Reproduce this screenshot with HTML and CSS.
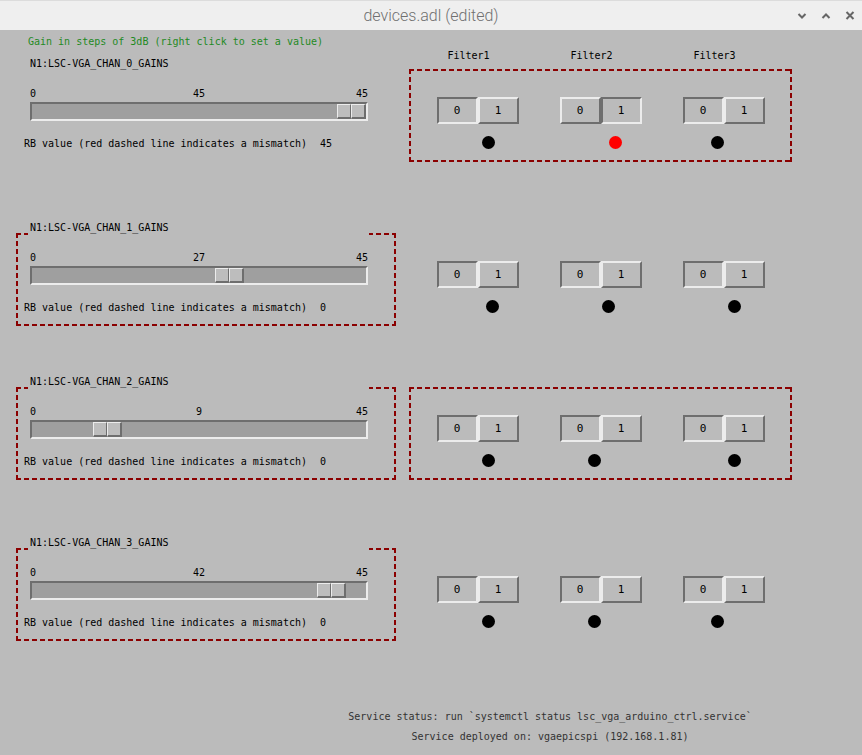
FILE: index.html
```html
<!DOCTYPE html>
<html>
<head>
<meta charset="utf-8">
<title>devices.adl (edited)</title>
<link rel="stylesheet" href="styles.css">
</head>
<body>
<div class="titlebar">
  <span></span>
  <span class="title">devices.adl (edited)</span>
  <div class="controls">
    <svg width="10" height="8" viewBox="0 0 10 8"><path d="M1.5 2 L5 5.5 L8.5 2" stroke="#666" stroke-width="2" fill="none"/></svg>
    <svg width="10" height="8" viewBox="0 0 10 8"><path d="M1.5 6 L5 2.5 L8.5 6" stroke="#666" stroke-width="2" fill="none"/></svg>
    <svg width="10" height="9" viewBox="0 0 10 9"><path d="M1.5 1 L8.5 8 M8.5 1 L1.5 8" stroke="#666" stroke-width="2" fill="none"/></svg>
  </div>
</div>
<main class="screen">
  <div class="pre">
    <div class="hint">Gain in steps of 3dB (right click to set a value)</div>
    <div class="filters"><span>Filter1</span><span>Filter2</span><span>Filter3</span></div>
  </div>

  <div class="row">
    <section class="gain">
      <div class="gain-label">N1:LSC-VGA_CHAN_0_GAINS</div>
      <div class="scale"><span class="lo">0</span><span class="mid">45</span><span class="hi">45</span></div>
      <div class="track"><div class="thumb" style="margin-left: calc((100% - 29px) * 1)"><i></i><i></i></div></div>
      <div class="rb"><span class="rb-label">RB value (red dashed line indicates a mismatch)</span><span>45</span></div>
    </section>
    <section class="bank dashed">
      <div class="cell"><div class="toggle"><span class="btn down">0</span><span class="btn up">1</span></div><div class="dot dot-m"></div></div>
      <div class="cell"><div class="toggle"><span class="btn up">0</span><span class="btn down">1</span></div><div class="dot red dot-r"></div></div>
      <div class="cell"><div class="toggle"><span class="btn down">0</span><span class="btn up">1</span></div><div class="dot dot-l"></div></div>
    </section>
  </div>

  <div class="row row-1">
    <section class="gain dashed">
      <div class="gain-label">N1:LSC-VGA_CHAN_1_GAINS</div>
      <div class="scale"><span class="lo">0</span><span class="mid">27</span><span class="hi">45</span></div>
      <div class="track"><div class="thumb" style="margin-left: calc((100% - 29px) * 0.6)"><i></i><i></i></div></div>
      <div class="rb"><span class="rb-label">RB value (red dashed line indicates a mismatch)</span><span>0</span></div>
    </section>
    <section class="bank">
      <div class="cell"><div class="toggle"><span class="btn down">0</span><span class="btn up">1</span></div><div class="dot dot-r"></div></div>
      <div class="cell"><div class="toggle"><span class="btn down">0</span><span class="btn up">1</span></div><div class="dot dot-s"></div></div>
      <div class="cell"><div class="toggle"><span class="btn down">0</span><span class="btn up">1</span></div><div class="dot dot-m"></div></div>
    </section>
  </div>

  <div class="row row-2">
    <section class="gain dashed">
      <div class="gain-label">N1:LSC-VGA_CHAN_2_GAINS</div>
      <div class="scale"><span class="lo">0</span><span class="mid">9</span><span class="hi">45</span></div>
      <div class="track"><div class="thumb" style="margin-left: calc((100% - 29px) * 0.2)"><i></i><i></i></div></div>
      <div class="rb"><span class="rb-label">RB value (red dashed line indicates a mismatch)</span><span>0</span></div>
    </section>
    <section class="bank dashed">
      <div class="cell"><div class="toggle"><span class="btn down">0</span><span class="btn up">1</span></div><div class="dot dot-m"></div></div>
      <div class="cell"><div class="toggle"><span class="btn down">0</span><span class="btn up">1</span></div><div class="dot dot-l"></div></div>
      <div class="cell"><div class="toggle"><span class="btn down">0</span><span class="btn up">1</span></div><div class="dot dot-m"></div></div>
    </section>
  </div>

  <div class="row row-3">
    <section class="gain dashed">
      <div class="gain-label">N1:LSC-VGA_CHAN_3_GAINS</div>
      <div class="scale"><span class="lo">0</span><span class="mid">42</span><span class="hi">45</span></div>
      <div class="track"><div class="thumb" style="margin-left: calc((100% - 29px) * 0.9333)"><i></i><i></i></div></div>
      <div class="rb"><span class="rb-label">RB value (red dashed line indicates a mismatch)</span><span>0</span></div>
    </section>
    <section class="bank">
      <div class="cell"><div class="toggle"><span class="btn down">0</span><span class="btn up">1</span></div><div class="dot dot-m"></div></div>
      <div class="cell"><div class="toggle"><span class="btn down">0</span><span class="btn up">1</span></div><div class="dot dot-l"></div></div>
      <div class="cell"><div class="toggle"><span class="btn down">0</span><span class="btn up">1</span></div><div class="dot dot-l"></div></div>
    </section>
  </div>

  <footer class="status">
    <div>Service status: run `systemctl status lsc_vga_arduino_ctrl.service`</div>
    <div>Service deployed on: vgaepicspi (192.168.1.81)</div>
  </footer>
</main>
</body>
</html>
```

FILE: styles.css
```css
html, body {
  margin: 0;
  padding: 0;
}
body {
  width: 862px;
  height: 755px;
  overflow: hidden;
  background: #bbbbbb;
  font-family: "DejaVu Sans Mono", "Liberation Mono", monospace;
  font-size: 10px;
  color: #000;
}

/* title bar */
.titlebar {
  height: 30px;
  box-sizing: border-box;
  border-top: 1px solid #dcdcdc;
  background: #efefef;
  display: grid;
  grid-template-columns: 1fr auto 1fr;
  align-items: center;
  font-family: Roboto, "Liberation Sans", sans-serif;
}
.title {
  font-size: 16px;
  font-weight: 300;
  color: #707070;
}
.controls {
  justify-self: end;
  display: flex;
  align-items: center;
  gap: 14px;
  padding-right: 7px;
}
.controls svg {
  display: block;
}

/* screen */
.screen {
  padding-left: 16px;
}
.pre {
  display: flex;
  gap: 13px;
  height: 39px;
}
.hint {
  width: 380px;
  box-sizing: border-box;
  padding-left: 12px;
  margin-top: 6px;
  line-height: 12px;
  height: 12px;
  color: #1f8a1f;
}
.filters {
  display: grid;
  grid-template-columns: repeat(3, 123px);
  padding-left: 7px;
  margin-top: 20px;
  line-height: 12px;
  height: 12px;
}
.filters span {
  text-align: center;
  padding-right: 18px;
}

.row {
  display: flex;
  gap: 13px;
}
.row-1 { margin-top: 71px; }
.row-2 { margin-top: 61px; }
.row-3 { margin-top: 68px; }

.dashed {
  background-image:
    repeating-linear-gradient(90deg, #8b0000 0 5px, transparent 5px 8px),
    repeating-linear-gradient(90deg, #8b0000 0 5px, transparent 5px 8px),
    repeating-linear-gradient(180deg, #8b0000 0 5px, transparent 5px 8px),
    repeating-linear-gradient(180deg, #8b0000 0 5px, transparent 5px 8px);
  background-size: 100% 2px, 100% 2px, 2px 100%, 2px 100%;
  background-position: 0 0, 0 100%, 0 0, 100% 0;
  background-repeat: no-repeat;
  background-origin: border-box;
}

/* gain slider panel */
.gain {
  width: 380px;
  box-sizing: border-box;
  border: 2px solid transparent;
  padding: 0 0 10px;
}
.gain-label {
  margin: -14px 0 0 10px;
  padding: 0 2px;
  width: 337px;
  height: 14px;
  line-height: 14px;
  background: #bbbbbb;
}
.scale {
  margin: 17px 0 0 12px;
  width: 338px;
  display: grid;
  grid-template-columns: 1fr auto 1fr;
  line-height: 12px;
  height: 12px;
}
.scale .lo { text-align: left; }
.scale .mid { text-align: center; }
.scale .hi { text-align: right; }
.track {
  margin: 2px 0 0 12px;
  width: 338px;
  height: 19px;
  box-sizing: border-box;
  border: 2px solid;
  border-color: #6e6e6e #ececec #ececec #6e6e6e;
  background: #9f9f9f;
}
.thumb {
  width: 29px;
  height: 15px;
  display: flex;
}
.thumb i {
  flex: 1;
  box-sizing: border-box;
  border-style: solid;
  border-width: 1px 1px 2px 1px;
  border-color: #ececec #6e6e6e #6e6e6e #ececec;
  background: #bdbdbd;
}
.thumb i + i {
  border-right-width: 2px;
}
.rb {
  margin: 17px 0 0 6px;
  display: flex;
  line-height: 12px;
  height: 12px;
}
.rb-label {
  width: 296px;
}

/* filter toggles */
.bank {
  width: 383px;
  box-sizing: border-box;
  border: 2px solid transparent;
  padding: 26px 5px 0;
  display: grid;
  grid-template-columns: repeat(3, 123px);
  align-content: start;
}
.cell {
  display: flex;
  flex-direction: column;
  align-items: center;
}
.toggle {
  display: flex;
}
.btn {
  width: 41px;
  height: 27px;
  box-sizing: border-box;
  border: 2px solid;
  display: flex;
  align-items: center;
  justify-content: center;
  font-size: 11px;
}
.btn.up {
  border-color: #ececec #6e6e6e #6e6e6e #ececec;
}
.btn.down {
  border-color: #6e6e6e #ececec #ececec #6e6e6e;
}
.dot {
  width: 13px;
  height: 13px;
  border-radius: 50%;
  background: #000;
  margin-top: 12px;
}
.dot.red {
  background: #ff0000;
}
.dot-s { margin-left: 16px; }
.dot-m { margin-left: 22px; }
.dot-r { margin-left: 30px; }
.dot-l { margin-right: 12px; }

/* footer */
.status {
  margin: 66px 0 0 304px;
  width: 460px;
  text-align: center;
  line-height: 20px;
  color: #333333;
}
```
